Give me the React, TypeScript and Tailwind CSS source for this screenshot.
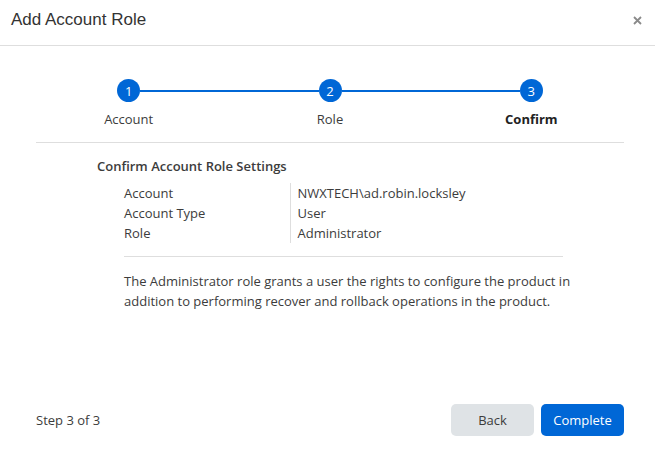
const steps = ["Account", "Role", "Confirm"];
const currentStep = 3;

const settings = [
  { label: "Account", value: "NWXTECH\\ad.robin.locksley" },
  { label: "Account Type", value: "User" },
  { label: "Role", value: "Administrator" },
];

const CloseIcon = () => (
  <svg
    width="9"
    height="9"
    viewBox="0 0 9 9"
    fill="none"
    stroke="currentColor"
    strokeWidth="1.8"
    aria-hidden="true"
  >
    <path d="M1 1l7 7M8 1l-7 7" />
  </svg>
);

const Stepper = () => (
  <ol className="-mx-2 grid grid-cols-3">
    {steps.map((step, index) => (
      <li
        key={step}
        aria-current={index + 1 === currentStep ? "step" : undefined}
      >
        <div className="flex items-center">
          <span
            className={`h-0.5 flex-1 ${index > 0 ? "bg-[#0067d6]" : ""}`}
          />
          <span className="flex size-[23px] items-center justify-center rounded-full bg-[#0067d6] font-medium text-white">
            {index + 1}
          </span>
          <span
            className={`h-0.5 flex-1 ${
              index < steps.length - 1 ? "bg-[#0067d6]" : ""
            }`}
          />
        </div>
        <p
          className={`mt-[7px] text-center ${
            index + 1 === currentStep ? "font-bold text-[#222222]" : ""
          }`}
        >
          {step}
        </p>
      </li>
    ))}
  </ol>
);

export default function App() {
  return (
    <section
      role="dialog"
      aria-labelledby="dialog-title"
      className="w-full bg-white font-['Open_Sans',sans-serif] text-[13px] leading-5 text-[#3c3c3c]"
    >
      <header className="flex items-center justify-between border-b border-[#dedede] pt-2 pr-[13px] pb-[13px] pl-[11px]">
        <h1
          id="dialog-title"
          className="font-['Liberation_Sans',sans-serif] text-[17px] leading-6 text-[#333333]"
        >
          Add Account Role
        </h1>
        <button type="button" aria-label="Close" className="text-[#8a8a8a]">
          <CloseIcon />
        </button>
      </header>

      <div className="pr-[31px] pl-9">
        <div className="border-b border-[#dedede] pt-[33px] pb-[13px]">
          <Stepper />
        </div>

        <div className="px-[61px] pt-[13px]">
          <h2 className="font-semibold">Confirm Account Role Settings</h2>
          <div className="mt-[7px] pl-[27px]">
            <table className="w-full text-left">
              <tbody>
                {settings.map((item) => (
                  <tr key={item.label}>
                    <th
                      scope="row"
                      className="w-[166px] border-r border-[#dedede] p-0 font-normal"
                    >
                      {item.label}
                    </th>
                    <td className="p-0 pl-[7px]">{item.value}</td>
                  </tr>
                ))}
              </tbody>
            </table>
            <div className="mt-[13px] border-t border-[#dedede] pt-[14px]">
              <p className="-mr-4">
                The Administrator role grants a user the rights to configure the
                product in addition to performing recover and rollback
                operations in the product.
              </p>
            </div>
          </div>
        </div>

        <footer className="flex items-center justify-between pt-[93px] pb-[23px]">
          <p>Step 3 of 3</p>
          <div className="flex gap-[7px]">
            <button
              type="button"
              className="h-8 w-[83px] rounded-[5px] bg-[#dfe3e6]"
            >
              Back
            </button>
            <button
              type="button"
              className="h-8 w-[83px] rounded-[5px] bg-[#0067d6] font-medium text-white"
            >
              Complete
            </button>
          </div>
        </footer>
      </div>
    </section>
  );
}
